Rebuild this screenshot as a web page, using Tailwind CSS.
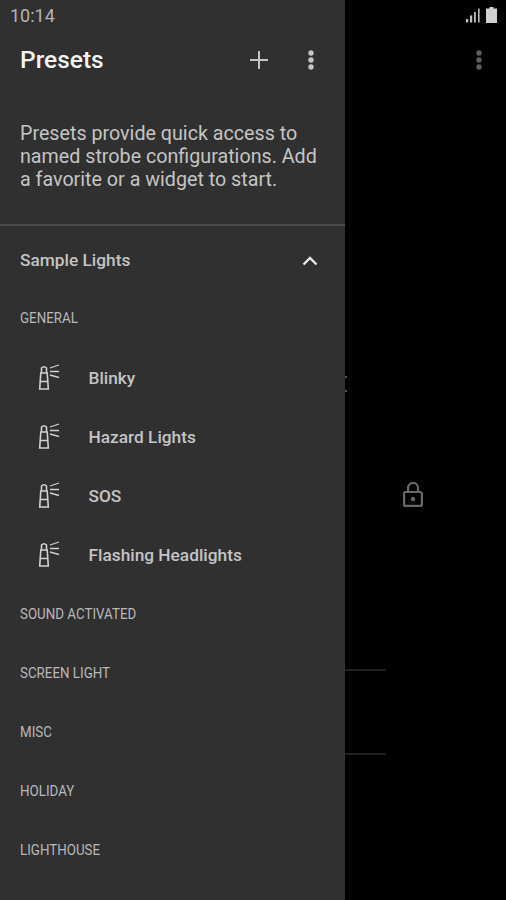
<!DOCTYPE html>
<html lang="en">
<head>
    <meta charset="UTF-8">
    <meta name="viewport" content="width=device-width, initial-scale=1.0">
    <title>Presets</title>
    <script src="https://cdn.jsdelivr.net/npm/@tailwindcss/browser@4"></script>
</head>
<body class="bg-black">
    <div class="flex w-[506px] h-[900px] overflow-hidden bg-black font-['Roboto',sans-serif]">
        <!-- drawer -->
        <aside class="w-[345px] h-full shrink-0 bg-[#303030] flex flex-col">
            <div class="h-[32px] pl-[10px] pb-[2px] flex items-center text-[18px] text-[#b5b5b5]">10:14</div>

            <div class="h-[56px] pl-[20px] pr-[20px] pb-[1px] flex items-center text-white">
                <h1 class="text-[24.5px] font-medium flex-1 mt-[2px] text-[#f5f5f5]">Presets</h1>
                <svg class="w-[24px] h-[24px] mr-[28px]" viewBox="0 0 24 24" fill="none" stroke="#c4c4c4" stroke-width="2"><path d="M12 3v18M3 12h18"/></svg>
                <svg class="w-[24px] h-[24px] mr-[2px]" viewBox="0 0 24 24" fill="#c4c4c4"><circle cx="12" cy="5" r="2.7"/><circle cx="12" cy="12" r="2.7"/><circle cx="12" cy="19" r="2.7"/></svg>
            </div>

            <p class="pl-[20px] pr-[20px] pt-[34px] text-[19.7px] leading-[23px] text-[#c4c4c4]">Presets provide quick access to named strobe configurations. Add a favorite or a widget to start.</p>

            <div class="mt-[33px] h-[2px] bg-[#4c4c4c]"></div>

            <div class="h-[69px] pl-[20px] pr-[24px] flex items-center justify-between">
                <span class="text-[17.3px] font-medium text-[#c4c4c4]">Sample Lights</span>
                <svg class="w-[22px] h-[22px]" viewBox="0 0 22 22" fill="none" stroke="#e8e8e8" stroke-width="2.4"><path d="M4.5 14.5 11 8l6.5 6.5"/></svg>
            </div>

            <div class="h-[47px] pl-[20px] flex items-center text-[#b8b8b8]"><span class="text-[15px] uppercase scale-x-[0.89] origin-left">General</span></div>

            <ul class="mt-[7px]">
                <li class="h-[59px] pl-[36px] flex items-center gap-[27.5px]">
                    <svg class="w-[25px] h-[26px] mb-[4px]" viewBox="0 0 25 26" fill="none" stroke="#d0d0d0" stroke-width="1.6"><path d="M5.5 9V4Q8 1.5 10.5 4V9M4.8 9h6.4l1.1 16H3.7zM4.2 17.5h7.6"/><path d="M14 4l9-3M14 7.5h9M14 11l9 2.5" stroke-width="1.3"/></svg>
                    <span class="text-[17.3px] font-medium text-[#c4c4c4]">Blinky</span>
                </li>
                <li class="h-[59px] pl-[36px] flex items-center gap-[27.5px]">
                    <svg class="w-[25px] h-[26px] mb-[4px]" viewBox="0 0 25 26" fill="none" stroke="#d0d0d0" stroke-width="1.6"><path d="M5.5 9V4Q8 1.5 10.5 4V9M4.8 9h6.4l1.1 16H3.7zM4.2 17.5h7.6"/><path d="M14 4l9-3M14 7.5h9M14 11l9 2.5" stroke-width="1.3"/></svg>
                    <span class="text-[17.3px] font-medium text-[#c4c4c4]">Hazard Lights</span>
                </li>
                <li class="h-[59px] pl-[36px] flex items-center gap-[27.5px]">
                    <svg class="w-[25px] h-[26px] mb-[4px]" viewBox="0 0 25 26" fill="none" stroke="#d0d0d0" stroke-width="1.6"><path d="M5.5 9V4Q8 1.5 10.5 4V9M4.8 9h6.4l1.1 16H3.7zM4.2 17.5h7.6"/><path d="M14 4l9-3M14 7.5h9M14 11l9 2.5" stroke-width="1.3"/></svg>
                    <span class="text-[17.3px] font-medium text-[#c4c4c4]">SOS</span>
                </li>
                <li class="h-[59px] pl-[36px] flex items-center gap-[27.5px]">
                    <svg class="w-[25px] h-[26px] mb-[4px]" viewBox="0 0 25 26" fill="none" stroke="#d0d0d0" stroke-width="1.6"><path d="M5.5 9V4Q8 1.5 10.5 4V9M4.8 9h6.4l1.1 16H3.7zM4.2 17.5h7.6"/><path d="M14 4l9-3M14 7.5h9M14 11l9 2.5" stroke-width="1.3"/></svg>
                    <span class="text-[17.3px] font-medium text-[#c4c4c4]">Flashing Headlights</span>
                </li>
            </ul>

            <div class="h-[59px] pl-[20px] flex items-center text-[#b8b8b8]"><span class="text-[15px] uppercase scale-x-[0.89] origin-left">Sound Activated</span></div>
            <div class="h-[59px] pl-[20px] flex items-center text-[#b8b8b8]"><span class="text-[15px] uppercase scale-x-[0.89] origin-left">Screen Light</span></div>
            <div class="h-[59px] pl-[20px] flex items-center text-[#b8b8b8]"><span class="text-[15px] uppercase scale-x-[0.89] origin-left">Misc</span></div>
            <div class="h-[59px] pl-[20px] flex items-center text-[#b8b8b8]"><span class="text-[15px] uppercase scale-x-[0.89] origin-left">Holiday</span></div>
            <div class="h-[59px] pl-[20px] flex items-center text-[#b8b8b8]"><span class="text-[15px] uppercase scale-x-[0.89] origin-left">Lighthouse</span></div>
        </aside>

        <!-- dimmed app behind the drawer -->
        <main class="flex-1 flex flex-col">
            <div class="h-[32px] pr-[9px] flex items-center justify-end gap-[6px] pb-[2px]">
                <svg class="w-[14px] h-[15px]" viewBox="0 0 14 15" fill="#bdbdbd"><rect x="0" y="11" width="2.2" height="3.5"/><rect x="4" y="7.5" width="2.2" height="7"/><rect x="8" y="4" width="1.8" height="10.5"/><rect x="12" y="0.5" width="1.6" height="14"/></svg>
                <svg class="w-[11px] h-[16px]" viewBox="0 0 11 16" fill="#d0d0d0"><path d="M3.5 0h4v1.5H11V16H0V1.5h3.5z"/></svg>
            </div>
            <div class="h-[56px] pr-[15px] pb-[1px] flex items-center justify-end">
                <svg class="w-[24px] h-[24px]" viewBox="0 0 24 24" fill="#5e5e5e"><circle cx="12" cy="5" r="2.7"/><circle cx="12" cy="12" r="2.7"/><circle cx="12" cy="19" r="2.7"/></svg>
            </div>
            <div class="mt-[288px] flex flex-col gap-[12px]">
                <div class="w-[2px] h-[2px] bg-[#555]"></div>
                <div class="w-[2px] h-[2px] bg-[#555]"></div>
            </div>
            <div class="mt-[90px] pl-[58px]">
                <svg class="block w-[20px] h-[25px]" viewBox="0 0 20 25" fill="none" stroke="#686868" stroke-width="2.2"><path d="M5 10V6a5 5 0 0 1 10 0v4"/><rect x="1.1" y="10" width="17.8" height="13.9" rx="1.5"/><circle cx="10" cy="17" r="2.2" fill="#686868" stroke="none"/></svg>
            </div>
            <div class="mt-[162px] w-[41px] h-[2px] bg-[#1f1f1f]"></div>
            <div class="mt-[82px] w-[41px] h-[2px] bg-[#1f1f1f]"></div>
        </main>
    </div>
</body>
</html>
